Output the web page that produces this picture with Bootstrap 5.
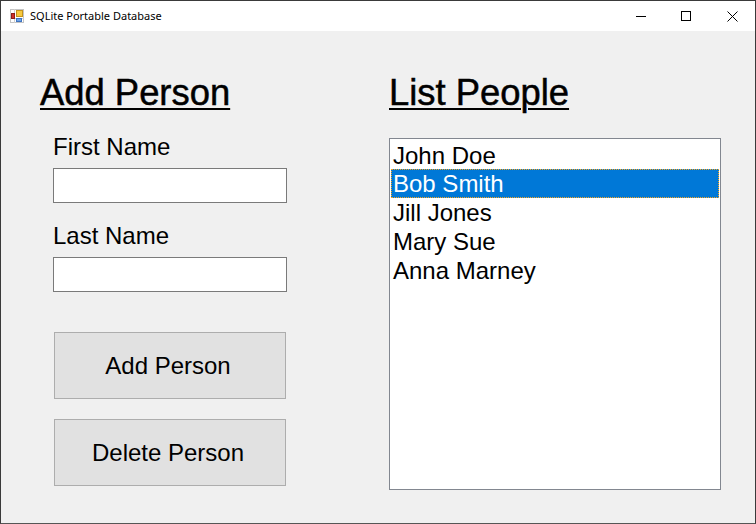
<!DOCTYPE html>
<html lang="en">
<head>
  <meta charset="UTF-8" />
  <meta name="viewport" content="width=device-width, initial-scale=1.0"/>
  <title>SQLite Portable Database</title>
  <link href="https://cdn.jsdelivr.net/npm/bootstrap@5.3.3/dist/css/bootstrap.min.css" rel="stylesheet">
  <style>
    html, body { height: 100%; }
    body { margin: 0; overflow: hidden; background: #f0f0f0; font-family: "Liberation Sans", Arial, sans-serif; color: #000; }
    .app-window { width: 756px; height: 524px; border: 1px solid #3a3a3a; border-bottom-color: #555; display: flex; flex-direction: column; }
    .title-bar { height: 30px; background: #fff; flex: none; }
    .title-text { font-family: "Noto Sans", "Liberation Sans", sans-serif; font-size: 11px; line-height: 30px; margin-left: 6px; }
    .app-icon { margin-left: 9px; }
    .win-btn { width: 45px; height: 30px; display: flex; align-items: center; justify-content: center; }
    .win-min, .win-max { padding-right: 2px; }
    .app-body { flex: 1; padding-top: 41px; padding-left: 39px; }
    .left-col { width: 349px; flex: none; }
    .right-col { width: 332px; flex: none; }
    .page-heading { font-size: 36.4px; line-height: 42px; margin: 0; font-weight: 400; text-decoration: underline; text-underline-offset: 3px; text-decoration-thickness: 2px; -webkit-text-stroke: .5px #000; }
    .form-area { padding-left: 13px; width: 247px; }
    .field-label { font-size: 24px; line-height: 28px; margin: 0 0 7px; display: block; }
    .first-label { margin-top: 19px; }
    .last-label { margin-top: 19px; }
    .field-input { width: 234px; height: 35px; border: 1px solid #7a7a7a; border-radius: 0; padding: 0 3px; font-size: 24px; background: #fff; }
    .form-btn { width: 232px; height: 67px; margin-left: 1px; display: block; background: #e1e1e1; border: 1px solid #adadad; border-radius: 0; font-size: 24px; color: #000; padding: 0 4px 0 0; }
    .form-btn:hover { background: #e1e1e1; border-color: #adadad; color: #000; }
    .add-btn { margin-top: 40px; }
    .del-btn { margin-top: 20px; }
    .people-list { width: 332px; height: 352px; margin-top: 24px; background: #fff; border: 1px solid #828790; padding: 2px 1px 1px; border-radius: 0; display: block; }
    .people-item { font-size: 24px; line-height: 29px; height: 29px; padding: 0 0 0 2px; border: 0; border-radius: 0; background: transparent; color: #000; }
    .people-item.active { background: #0078d7; color: #fff; outline: 1px dotted #f5a623; outline-offset: -1px; }
  </style>
</head>
<body>

  <div class="app-window">
    <!-- Title bar -->
    <div class="title-bar d-flex align-items-center">
      <svg class="app-icon" width="14" height="14" viewBox="0 0 14 14">
        <rect x="0.5" y="0.5" width="13" height="13" fill="#fff" stroke="#c4c4c4"/>
        <path d="M0 4.5H5M4.5 0V14M4.5 9.5H14" stroke="#d0d0d0" fill="none"/>
        <rect x="6.5" y="1.5" width="6" height="6" fill="#f7c93e" stroke="#c4931a"/>
        <rect x="1.5" y="4.5" width="3" height="5" fill="#cf2f2a" stroke="#8c1f1a"/>
        <rect x="6.5" y="9.5" width="5" height="3" fill="#6ea3e8" stroke="#3f74c0"/>
      </svg>
      <span class="title-text flex-grow-1">SQLite Portable Database</span>
      <div class="win-btn win-min"><svg width="11" height="11"><path d="M0 5.5H10" stroke="#000"/></svg></div>
      <div class="win-btn win-max"><svg width="11" height="11"><rect x=".5" y=".5" width="9" height="9" fill="none" stroke="#000"/></svg></div>
      <div class="win-btn"><svg width="11" height="11"><path d="M.5 .5L10.5 10.5M10.5 .5L.5 10.5" stroke="#000"/></svg></div>
    </div>

    <div class="app-body d-flex">
      <div class="left-col">
        <h1 class="page-heading">Add Person</h1>
        <form class="form-area">
          <label class="field-label first-label">First Name</label>
          <input type="text" class="form-control field-input" />
          <label class="field-label last-label">Last Name</label>
          <input type="text" class="form-control field-input" />
          <button type="button" class="btn form-btn add-btn">Add Person</button>
          <button type="button" class="btn form-btn del-btn">Delete Person</button>
        </form>
      </div>
      <div class="right-col">
        <h1 class="page-heading">List People</h1>
        <ul class="list-group people-list">
          <li class="list-group-item people-item">John Doe</li>
          <li class="list-group-item people-item active">Bob Smith</li>
          <li class="list-group-item people-item">Jill Jones</li>
          <li class="list-group-item people-item">Mary Sue</li>
          <li class="list-group-item people-item">Anna Marney</li>
        </ul>
      </div>
    </div>
  </div>

  <script src="https://cdn.jsdelivr.net/npm/bootstrap@5.3.3/dist/js/bootstrap.bundle.min.js"></script>
</body>
</html>
